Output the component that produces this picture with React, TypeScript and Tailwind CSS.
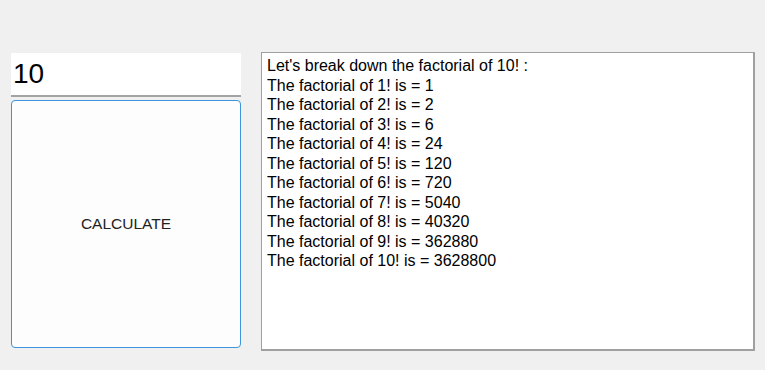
import React from "react";

const lines = [
  "Let's break down the factorial of 10! :",
  "The factorial of 1! is = 1",
  "The factorial of 2! is = 2",
  "The factorial of 3! is = 6",
  "The factorial of 4! is = 24",
  "The factorial of 5! is = 120",
  "The factorial of 6! is = 720",
  "The factorial of 7! is = 5040",
  "The factorial of 8! is = 40320",
  "The factorial of 9! is = 362880",
  "The factorial of 10! is = 3628800",
];

export default function App() {
  return (
    <div className="w-[765px] h-[370px] bg-[#f0f0f0] pt-[52px] pl-[11px] flex items-start gap-5 font-['Liberation_Sans',Arial,sans-serif] text-black">
      {/* left column: input + button */}
      <div className="w-[230px] mt-px flex flex-col gap-[3px]">
        <div className="h-[44px] bg-white border-b-2 border-[#a3a3a3] flex items-center pl-[2px] text-[28px] leading-none">
          10
        </div>
        <button className="h-[248px] bg-[#fdfdfd] border border-[#3d95e0] rounded-[4px] text-[15.5px] text-[#222]">
          CALCULATE
        </button>
      </div>

      {/* output box */}
      <div className="w-[494px] h-[299px] bg-white border border-[#a0a0a0] border-r-2 border-b-2 pl-[5px] pt-[3px] text-[16px] leading-[19.5px]">
        {lines.map((l) => (
          <div key={l}>{l}</div>
        ))}
      </div>
    </div>
  );
}
